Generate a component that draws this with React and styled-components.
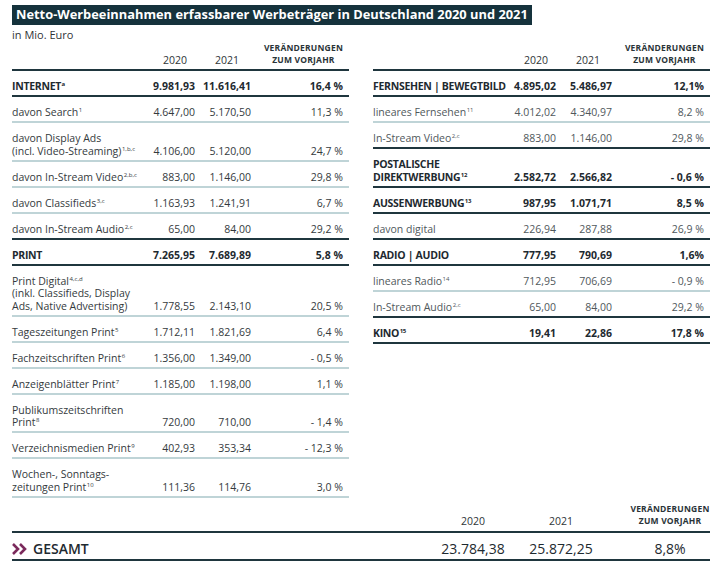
import React from "react";
import styled, { createGlobalStyle } from "styled-components";

const GlobalStyle = createGlobalStyle`
  body {
    margin: 0;
    background: #fff;
    font-family: "Open Sans", "Noto Sans", sans-serif;
    color: #2f3437;
  }
`;

const DARK = "#1f363e";
const LIGHT = "#bfd4d7";

const Page = styled.div`
  width: 728px;
  height: 561px;
  overflow: hidden;
  padding: 2px 18px 0 12px;
  box-sizing: border-box;
`;

const TitleBar = styled.h1`
  display: inline-block;
  margin: 0;
  padding: 1px 4px 2px 4px;
  background: #15323c;
  color: #fff;
  font-size: 12.85px;
  font-weight: 700;
  line-height: 17px;
`;

const Subtitle = styled.div`
  font-size: 11px;
  line-height: 14px;
  margin-top: 3px;
  color: #2f3437;
`;

const Columns = styled.div`
  display: grid;
  grid-template-columns: 337px 337px;
  column-gap: 24px;
  align-items: start;
`;

const Table = styled.div`
  display: flex;
  flex-direction: column;
`;

const Row = styled.div`
  display: grid;
  grid-template-columns: minmax(0, 1fr) 56px 56px 92px;
  padding-right: 6px;
  align-items: end;
  padding-top: 9px;
  padding-bottom: 2.5px;
  border-bottom: 2px solid ${(p) => (p.$line === "dark" ? DARK : LIGHT)};
  font-size: 10.5px;
  line-height: 12.5px;
  font-weight: ${(p) => (p.$bold ? 700 : 400)};
  color: ${(p) => (p.$bold ? "#1e2a30" : p.$muted ? "#50585c" : "#343a3d")};
`;

const HeadRow = styled.div`
  display: grid;
  grid-template-columns: minmax(0, 1fr) 56px 56px 92px;
  padding-right: 6px;
  align-items: end;
  padding-bottom: 3px;
  border-bottom: 2px solid ${DARK};
  color: #2f3437;
`;

const Label = styled.div`
  text-align: left;
  white-space: nowrap;
  letter-spacing: ${(p) => (p.$bold ? "-0.3px" : "0")};
`;

const Num = styled.div`
  text-align: right;
  white-space: nowrap;
`;

const Sup = styled.sup`
  font-size: 6px;
  line-height: 0;
  vertical-align: 4px;
  margin-left: 0.5px;
`;

const Year = styled.div`
  font-size: 10.5px;
  line-height: 12px;
  text-align: right;
  padding-right: ${(p) => p.$pr}px;
`;

const Change = styled.div`
  justify-self: end;
  text-align: center;
  font-size: 8.5px;
  font-weight: 700;
  line-height: 12px;
  letter-spacing: 0.2px;
  color: #2a3438;
`;

const Summary = styled.div`
  margin-top: 5px;
  display: flex;
  flex-direction: column;
`;

const SummaryHead = styled.div`
  display: grid;
  grid-template-columns: minmax(0, 1fr) 90px 86px 106px;
  align-items: end;
  padding-bottom: 4px;
  border-bottom: 2px solid ${DARK};
`;

const SummaryYear = styled.div`
  text-align: center;
  font-size: 10.5px;
  line-height: 12px;
`;

const SummaryChange = styled(Change)`
  width: 80px;
`;

const TotalRow = styled.div`
  display: grid;
  grid-template-columns: minmax(0, 1fr) 90px 86px 106px;
  align-items: center;
  padding: 8px 0 2px 0;
  border-bottom: 2px solid ${DARK};
  font-size: 14px;
  line-height: 16px;
  color: #1e2a30;
`;

const TotalLabel = styled.div`
  display: flex;
  align-items: center;
  gap: 5px;
  font-weight: 600;
`;

const TotalValue = styled.div`
  text-align: center;
  white-space: nowrap;
`;

const TotalPct = styled.div`
  justify-self: end;
  width: 80px;
  text-align: center;
`;

const Chevrons = () => (
  <svg width="16" height="12" viewBox="0 0 16 12">
    <path d="M1 1 L6 6 L1 11" fill="none" stroke="#7b2a5c" strokeWidth="2.6" />
    <path d="M8 1 L13 6 L8 11" fill="none" stroke="#7b2a5c" strokeWidth="2.6" />
  </svg>
);

const left = [
  { label: ["INTERNET"], sup: "a", v1: "9.981,93", v2: "11.616,41", pct: "16,4 %", bold: true, line: "dark" },
  { label: ["davon Search"], sup: "1", v1: "4.647,00", v2: "5.170,50", pct: "11,3 %" },
  { label: ["davon Display Ads", "(incl. Video-Streaming)"], sup: "1,b,c", v1: "4.106,00", v2: "5.120,00", pct: "24,7 %" },
  { label: ["davon In-Stream Video"], sup: "2,b,c", v1: "883,00", v2: "1.146,00", pct: "29,8 %" },
  { label: ["davon Classifieds"], sup: "3,c", v1: "1.163,93", v2: "1.241,91", pct: "6,7 %" },
  { label: ["davon In-Stream Audio"], sup: "2,c", v1: "65,00", v2: "84,00", pct: "29,2 %", line: "dark" },
  { label: ["PRINT"], v1: "7.265,95", v2: "7.689,89", pct: "5,8 %", bold: true, line: "dark" },
  { label: ["Print Digital", "(inkl. Classifieds, Display", "Ads, Native Advertising)"], sup: "4,c,d", supLine: 0, v1: "1.778,55", v2: "2.143,10", pct: "20,5 %" },
  { label: ["Tageszeitungen Print"], sup: "5", v1: "1.712,11", v2: "1.821,69", pct: "6,4 %" },
  { label: ["Fachzeitschriften Print"], sup: "6", v1: "1.356,00", v2: "1.349,00", pct: "- 0,5 %" },
  { label: ["Anzeigenblätter Print"], sup: "7", v1: "1.185,00", v2: "1.198,00", pct: "1,1 %" },
  { label: ["Publikumszeitschriften", "Print"], sup: "8", v1: "720,00", v2: "710,00", pct: "- 1,4 %" },
  { label: ["Verzeichnismedien Print"], sup: "9", v1: "402,93", v2: "353,34", pct: "- 12,3 %" },
  { label: ["Wochen-, Sonntags-", "zeitungen Print"], sup: "10", v1: "111,36", v2: "114,76", pct: "3,0 %" },
];

const right = [
  { label: ["FERNSEHEN | BEWEGTBILD"], v1: "4.895,02", v2: "5.486,97", pct: "12,1%", bold: true, line: "dark" },
  { label: ["lineares Fernsehen"], sup: "11", v1: "4.012,02", v2: "4.340,97", pct: "8,2 %" },
  { label: ["In-Stream Video"], sup: "2,c", v1: "883,00", v2: "1.146,00", pct: "29,8 %", line: "dark" },
  { label: ["POSTALISCHE", "DIREKTWERBUNG"], sup: "12", v1: "2.582,72", v2: "2.566,82", pct: "- 0,6 %", bold: true, line: "dark" },
  { label: ["AUSSENWERBUNG"], sup: "13", v1: "987,95", v2: "1.071,71", pct: "8,5 %", bold: true, line: "dark" },
  { label: ["davon digital"], v1: "226,94", v2: "287,88", pct: "26,9 %", line: "dark" },
  { label: ["RADIO | AUDIO"], v1: "777,95", v2: "790,69", pct: "1,6%", bold: true, line: "dark" },
  { label: ["lineares Radio"], sup: "14", v1: "712,95", v2: "706,69", pct: "- 0,9 %" },
  { label: ["In-Stream Audio"], sup: "2,c", v1: "65,00", v2: "84,00", pct: "29,2 %", line: "dark" },
  { label: ["KINO"], sup: "15", v1: "19,41", v2: "22,86", pct: "17,8 %", bold: true, line: "dark" },
];

const Header = () => (
  <HeadRow>
    <div />
    <Year $pr={8}>2020</Year>
    <Year $pr={12}>2021</Year>
    <Change>
      VERÄNDERUNGEN
      <br />
      ZUM VORJAHR
    </Change>
  </HeadRow>
);

const DataTable = ({ rows, muted }) => (
  <Table>
    <Header />
    {rows.map((r, i) => {
      const supLine = r.supLine ?? r.label.length - 1;
      return (
        <Row key={i} $bold={r.bold} $line={r.line} $muted={muted && !r.bold}>
          <Label $bold={r.bold}>
            {r.label.map((l, j) => (
              <div key={j}>
                {l}
                {r.sup && j === supLine && <Sup>{r.sup}</Sup>}
              </div>
            ))}
          </Label>
          <Num>{r.v1}</Num>
          <Num>{r.v2}</Num>
          <Num>{r.pct}</Num>
        </Row>
      );
    })}
  </Table>
);

export default function App() {
  return (
    <Page>
      <GlobalStyle />
      <TitleBar>Netto-Werbeeinnahmen erfassbarer Werbeträger in Deutschland 2020 und 2021</TitleBar>
      <Subtitle>in Mio. Euro</Subtitle>
      <Columns>
        <DataTable rows={left} />
        <DataTable rows={right} muted />
      </Columns>
      <Summary>
        <SummaryHead>
          <div />
          <SummaryYear>2020</SummaryYear>
          <SummaryYear>2021</SummaryYear>
          <SummaryChange>
            VERÄNDERUNGEN
            <br />
            ZUM VORJAHR
          </SummaryChange>
        </SummaryHead>
        <TotalRow>
          <TotalLabel>
            <Chevrons />
            GESAMT
          </TotalLabel>
          <TotalValue>23.784,38</TotalValue>
          <TotalValue>25.872,25</TotalValue>
          <TotalPct>8,8%</TotalPct>
        </TotalRow>
      </Summary>
    </Page>
  );
}
